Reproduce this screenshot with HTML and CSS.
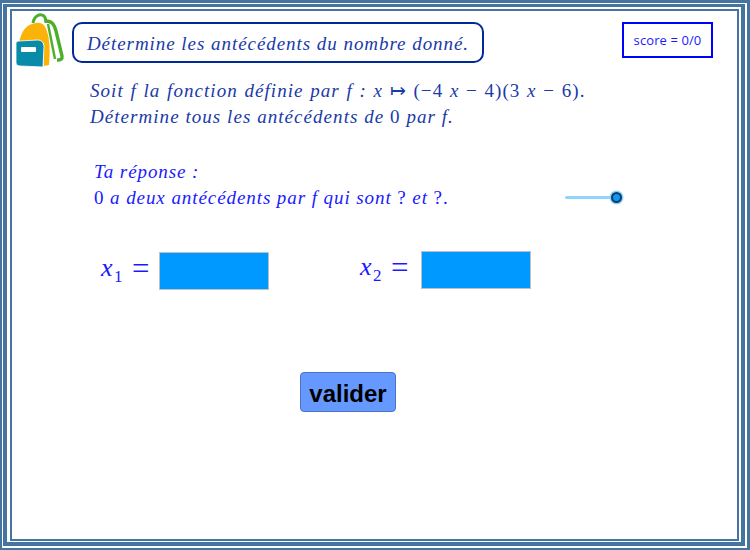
FILE: index.html
```html
<!DOCTYPE html>
<html lang="fr">
<head>
<meta charset="utf-8">
<title>Antécédents</title>
<link rel="stylesheet" href="styles.css">
</head>
<body>
<main class="frame">
  <div class="frame-mid">
    <div class="canvas">
      <header class="top">
        <svg class="bag" viewBox="0 0 50 56" width="50" height="56" aria-hidden="true">
          <path d="M18 10 C19 3 25 0 29 3 C31 5 31 7 31 10" fill="none" stroke="#4caf2a" stroke-width="3"/>
          <path d="M31 8 C37 8 39 11 41 18 L47 43 C47.500 46 46 47 42 47" fill="none" stroke="#4caf2a" stroke-width="3.400"/>
          <path d="M33 11 L40 46" stroke="#4caf2a" stroke-width="2.400" fill="none"/>
          <path d="M4 30 C6 19 11 11 21 10 C28 9 31 13 33 22 C35 30 35 40 34 52 L29 53 L29 30 Z" fill="#fcb309"/>
          <path d="M1 30 Q1 28 4 28 L23 27 Q28 27 29 33 L28 54 L5 53 Q1 53 1 50 Z" fill="#088ba8" stroke="#fff" stroke-width="0.800"/>
          <rect x="6" y="34" width="15" height="5" rx="1" fill="#fff"/>
        </svg>
        <h1 class="title">Détermine les antécédents du nombre donné.</h1>
        <div class="score">score = 0/0</div>
      </header>
      <section class="statement">
        <p class="math-line">Soit f la fonction définie par f : x <span class="up">↦ (−4</span> x <span class="up">− 4)(3</span> x <span class="up">− 6).</span></p>
        <p>Détermine tous les antécédents de <span class="up">0</span> par f.</p>
      </section>
      <section class="answer">
        <div class="answer-text">
          <p>Ta réponse :</p>
          <p><span class="up">0</span> a deux antécédents par f qui sont <span class="up">?</span> et <span class="up">?.</span></p>
        </div>
        <div class="slider"><span class="knob"></span></div>
      </section>
      <section class="fields">
        <label class="field field-one"><span class="eq">x<sub>1</sub> <span class="up sign">=</span></span><span class="box"></span></label>
        <label class="field field-two"><span class="eq">x<sub>2</sub> <span class="up sign">=</span></span><span class="box"></span></label>
      </section>
      <button class="validate" type="button">valider</button>
    </div>
  </div>
</main>
</body>
</html>
```
FILE: styles.css
```css
* { box-sizing: border-box; }
html, body { margin: 0; padding: 0; background: #fff; }
body { width: 750px; height: 550px; overflow: hidden; }
p, h1 { margin: 0; font-weight: normal; }
.frame {
  width: 750px; height: 550px; background: #fff;
  border: solid #44749f; border-width: 3px 3px 2px 2px;
  padding: 1px 2px 2px 1px;
}
.frame-mid {
  height: 100%; border: solid #44749f; border-width: 3px 4px 4px 4px;
  padding: 2px 2px 1px 3px;
}
.canvas {
  height: 100%; border: 2px solid #44749f; padding: 0 0 0 3px;
  font-family: "Liberation Serif", serif; font-style: italic;
}
.up { font-style: normal; }
.top { display: flex; align-items: flex-start; height: 59px; padding-top: 2px; }
.bag { flex: none; }
.title {
  margin: 9px 0 0 7px; width: 412px; height: 41px; border: 2px solid #00299a; border-radius: 10px;
  font-size: 19px; line-height: 39px; color: #1a3aa8; text-align: center; letter-spacing: .95px; white-space: nowrap;
}
.score {
  margin: 9px 0 0 138px; width: 91px; height: 36px; border: 2px solid #0000ff;
  font: normal 13px/32px "Open Sans", sans-serif; letter-spacing: .1px; color: #1a1aff; text-align: center; white-space: nowrap;
}
.statement { margin: 8px 0 0 75px; color: #1a3aa8; font-size: 19px; line-height: 26px; letter-spacing: 1.05px; white-space: nowrap; }
.math-line { word-spacing: .9px; }
.answer { display: flex; margin: 29px 0 0 79px; height: 51px; color: #1a1aff; font-size: 19px; line-height: 26px; letter-spacing: .92px; white-space: nowrap; }
.answer-text { width: 471px; }
.slider { position: relative; width: 52px; height: 3px; margin-top: 37px; background: #8fd4fb; border-radius: 2px; }
.knob { position: absolute; right: -5px; top: -4px; width: 11px; height: 11px; border-radius: 50%; background: #0d96f2; border: 2px solid #0d3a66; box-shadow: 0 0 0 1.5px #8fd4fb; }
.fields { display: flex; margin: 42px 0 0 86px; color: #1a1aff; font-size: 26px; }
.field { display: flex; align-items: flex-start; }
.field-two { margin-left: 91px; margin-top: -1px; }
.eq { width: 58px; height: 38px; line-height: 32px; letter-spacing: 1.5px; white-space: nowrap; }
.field-two .eq { width: 61px; }
.eq sub { font-size: 17px; font-style: normal; line-height: 0; }
.sign { font-size: 31px; line-height: 0; letter-spacing: 0; vertical-align: -3px; }
.box { width: 110px; height: 38px; background: #0099ff; border: 1px solid #c0c0c0; }
.validate {
  display: block; margin: 82px 0 0 285px; width: 96px; height: 40px;
  background: #6699ff; border: 1px solid #4a74c4; border-radius: 4px;
  font: bold 24px "Liberation Sans", sans-serif; color: #000; padding: 3px 0 0;
}
```
